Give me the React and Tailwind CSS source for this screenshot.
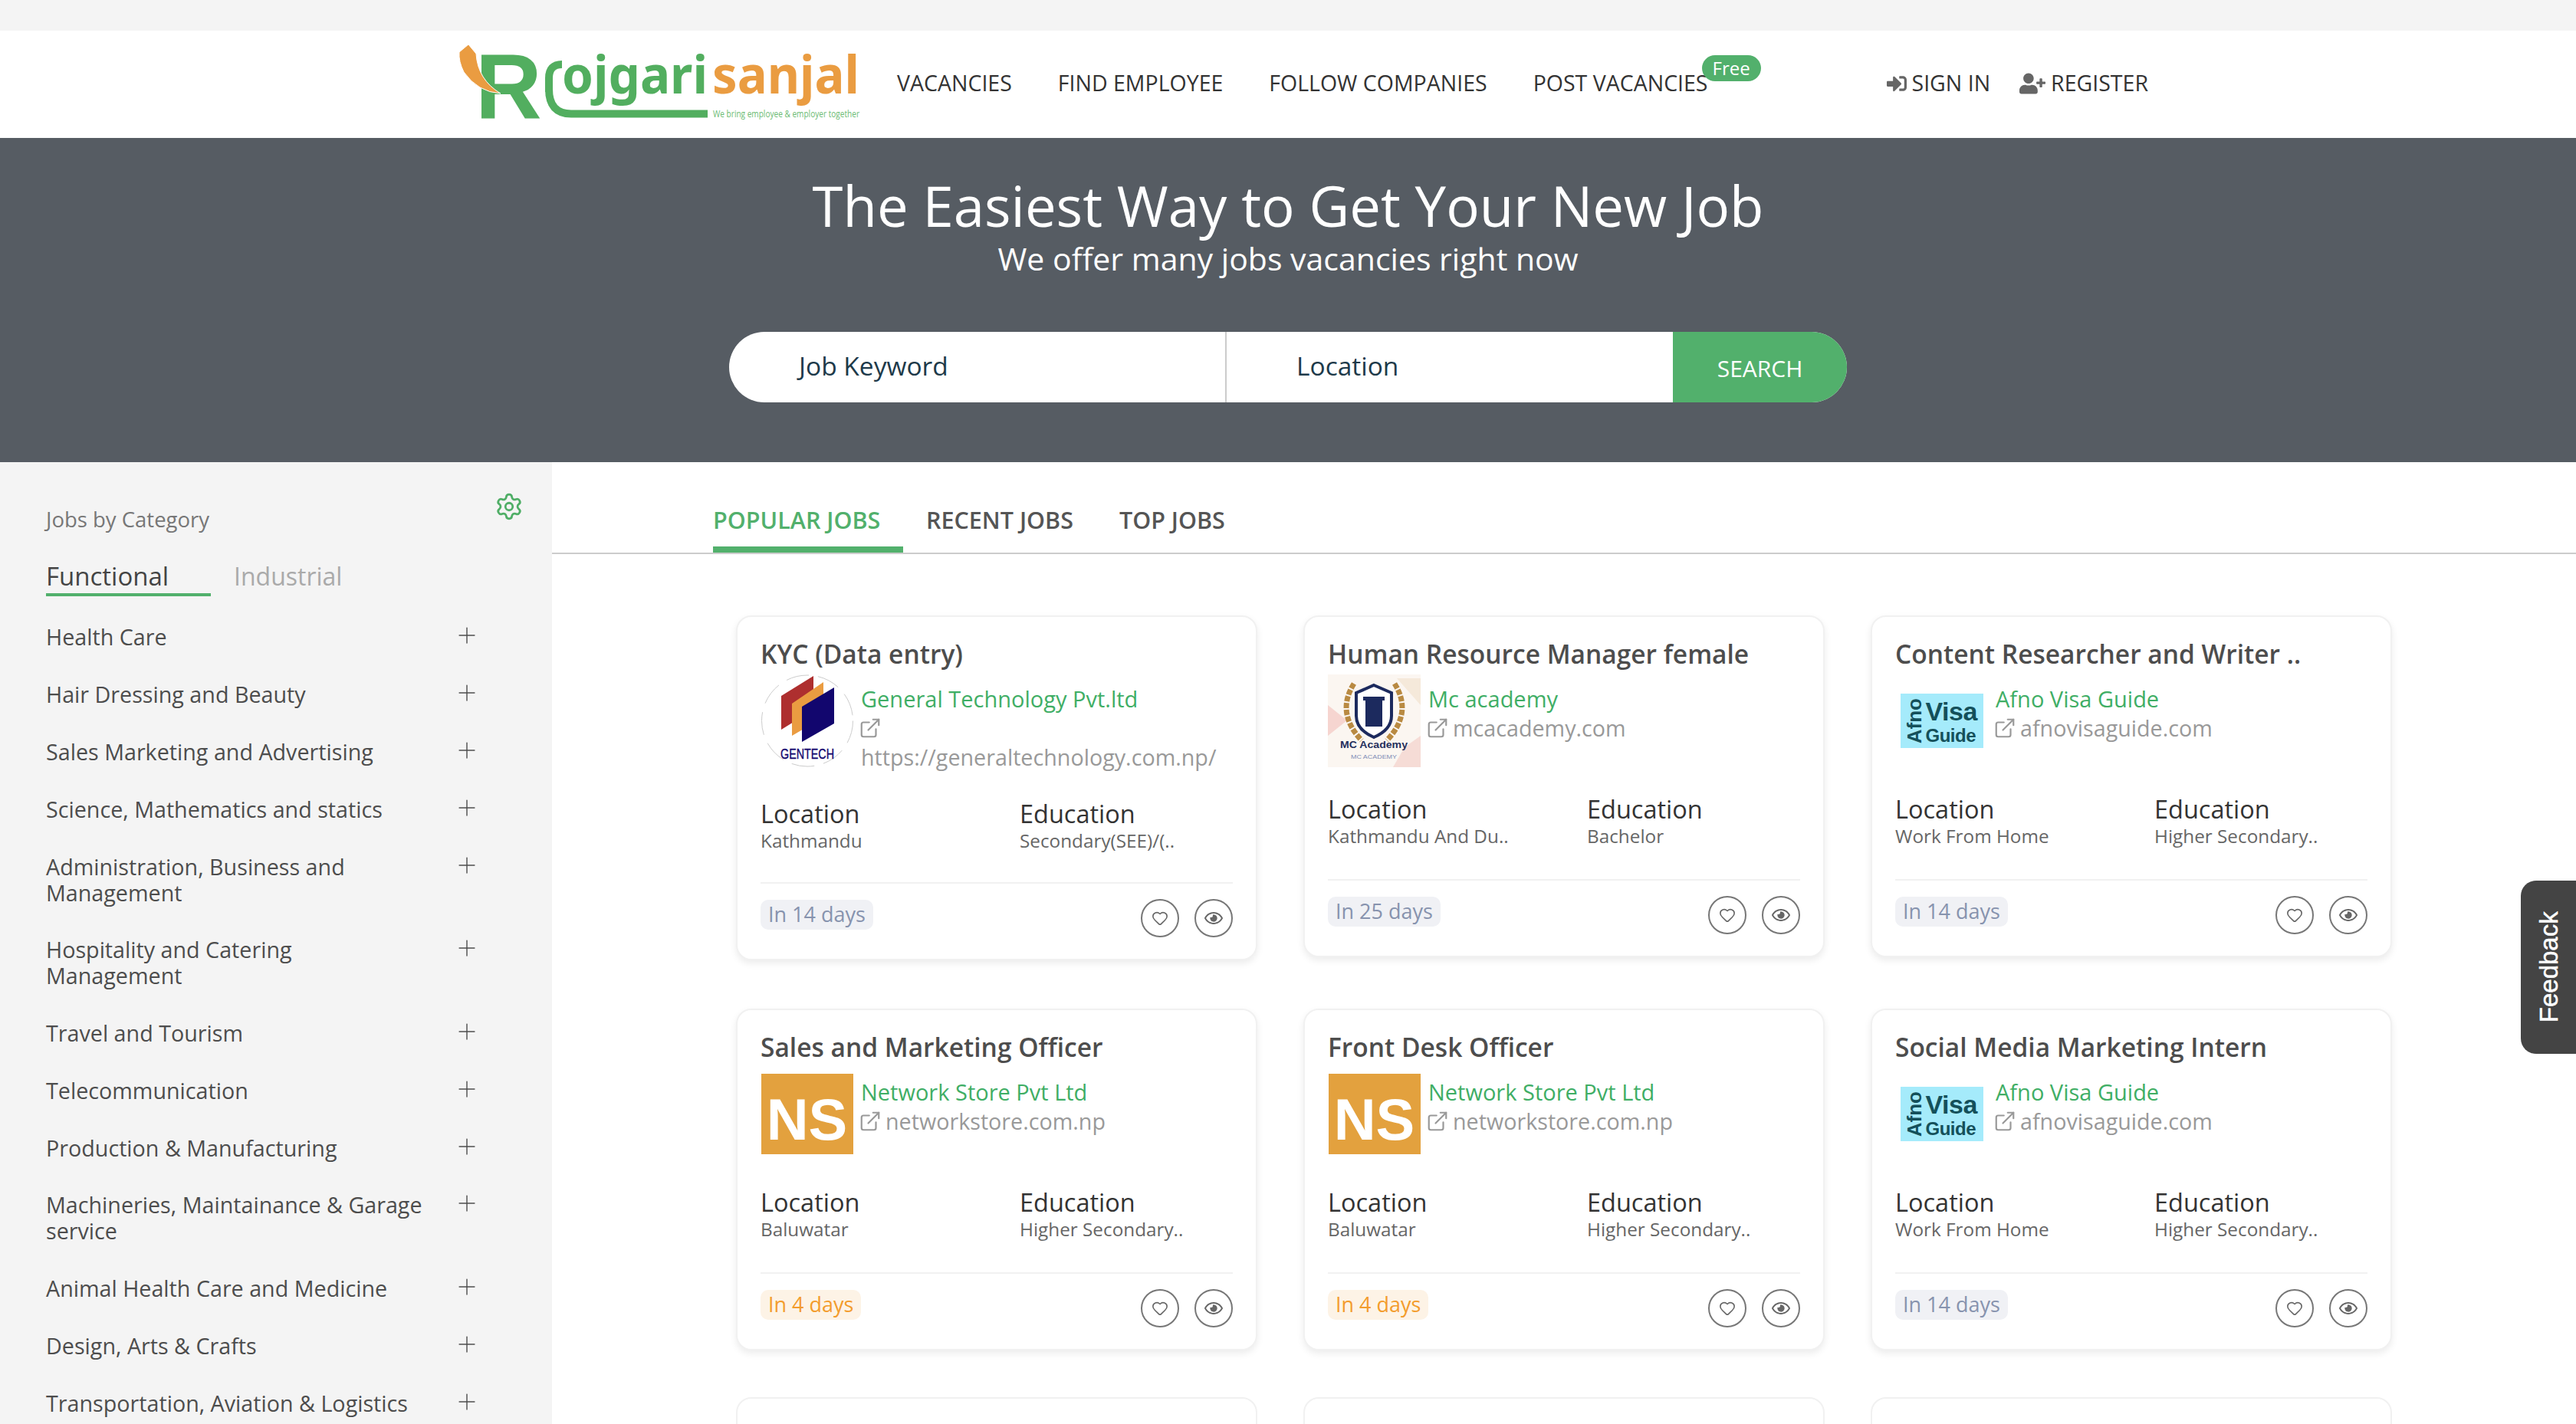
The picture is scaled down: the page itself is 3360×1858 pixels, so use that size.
// App.jsx
import React from 'react';
import { ExternalLink, Heart, Plus, Settings } from 'lucide-react';
import { FaRegEye, FaSignInAlt, FaUserPlus } from 'react-icons/fa';

const categories = [
  'Health Care',
  'Hair Dressing and Beauty',
  'Sales Marketing and Advertising',
  'Science, Mathematics and statics',
  'Administration, Business and Management',
  'Hospitality and Catering Management',
  'Travel and Tourism',
  'Telecommunication',
  'Production & Manufacturing',
  'Machineries, Maintainance & Garage service',
  'Animal Health Care and Medicine',
  'Design, Arts & Crafts',
  'Transportation, Aviation & Logistics',
];

const jobs = [
  { title: 'KYC (Data entry)', company: 'General Technology Pvt.ltd', site: 'https://generaltechnology.com.np/', logo: 'gentech', location: 'Kathmandu', education: 'Secondary(SEE)/(..', days: 'In 14 days', stacked: true },
  { title: 'Human Resource Manager female', company: 'Mc academy', site: 'mcacademy.com', logo: 'mc', location: 'Kathmandu And Du..', education: 'Bachelor', days: 'In 25 days' },
  { title: 'Content Researcher and Writer ..', company: 'Afno Visa Guide', site: 'afnovisaguide.com', logo: 'afno', location: 'Work From Home', education: 'Higher Secondary..', days: 'In 14 days' },
  { title: 'Sales and Marketing Officer', company: 'Network Store Pvt Ltd', site: 'networkstore.com.np', logo: 'ns', location: 'Baluwatar', education: 'Higher Secondary..', days: 'In 4 days', soon: true },
  { title: 'Front Desk Officer', company: 'Network Store Pvt Ltd', site: 'networkstore.com.np', logo: 'ns', location: 'Baluwatar', education: 'Higher Secondary..', days: 'In 4 days', soon: true },
  { title: 'Social Media Marketing Intern', company: 'Afno Visa Guide', site: 'afnovisaguide.com', logo: 'afno', location: 'Work From Home', education: 'Higher Secondary..', days: 'In 14 days' },
];

const SiteLogo = () => (
  <svg width="524" height="100" viewBox="0 0 524 100" className="shrink-0 overflow-visible">
    {/* underline swoosh, also the small r */}
    <path d="M117 60 V42 Q117 24 134 24 M117 56 Q117 88.5 146 88.5 H324" fill="none" stroke="#52ae5f" strokeWidth="10" />
    {/* the R */}
    <text x="21" y="95" fontFamily="'Liberation Sans', sans-serif" fontWeight="700" fontSize="120" fill="#52ae5f">R</text>
    {/* arrow over the R */}
    <path d="M12 -2 L22 10 Q24 44 54 62 Q24 60 6 34 Q-1 20 0 8 Z" fill="#ea9c41" stroke="#fff" strokeWidth="1" />
    <text x="134" y="62" fontFamily="'Noto Sans', sans-serif" fontWeight="700" fontSize="68" fill="#52ae5f" textLength="190" lengthAdjust="spacingAndGlyphs">ojgari</text>
    <text x="330" y="62" fontFamily="'Noto Sans', sans-serif" fontWeight="700" fontSize="68" fill="#ea9c41" textLength="192" lengthAdjust="spacingAndGlyphs">sanjal</text>
    <text x="331" y="93" fontFamily="'Open Sans', sans-serif" fontSize="12" fill="#6bbb73" textLength="191" lengthAdjust="spacingAndGlyphs">We bring employee &amp; employer together</text>
  </svg>
);

const GentechLogo = () => (
  <svg width="120" height="121" viewBox="0 0 120 121">
    <circle cx="60" cy="60.5" r="59.5" fill="#fff" stroke="#ccc" strokeWidth="1" strokeDasharray="30 12" />
    <polygon points="26,28 68,2 68,46 26,72" fill="#ae2f2f" />
    <polygon points="40,38 81,10 81,56 40,80" fill="#ea9c41" />
    <polygon points="53,42 95,17 95,64 53,88" fill="#12066e" />
    <text x="60" y="110" textAnchor="middle" fontFamily="'Liberation Sans', sans-serif" fontSize="18" fill="#12066e" stroke="#12066e" strokeWidth="0.4" textLength="70" lengthAdjust="spacingAndGlyphs">GENTECH</text>
  </svg>
);

const McLogo = () => (
  <svg width="121" height="121" viewBox="0 0 121 121">
    <rect width="121" height="121" fill="#fbf6f1" />
    <polygon points="0,40 25,60 0,80" fill="#f6d5d0" />
    <polygon points="90,5 121,5 121,40" fill="#f5e9da" />
    <polygon points="100,95 121,80 121,121 85,121" fill="#f6dcd6" />
    <path d="M34 12 Q10 50 44 86" fill="none" stroke="#b98a42" strokeWidth="7" strokeDasharray="7 2" />
    <path d="M87 12 Q111 50 77 86" fill="none" stroke="#b98a42" strokeWidth="7" strokeDasharray="7 2" />
    <path d="M60 14 L83 24 V54 Q83 72 60 82 Q37 72 37 54 V24 Z" fill="#fff" stroke="#1c2a5e" strokeWidth="4" />
    <rect x="49" y="34" width="22" height="34" fill="#1c2a5e" />
    <rect x="46" y="29" width="28" height="5" fill="#1c2a5e" />
    <text x="60" y="96" textAnchor="middle" fontFamily="'Liberation Sans', sans-serif" fontSize="12" fontWeight="700" fill="#25305c" textLength="88" lengthAdjust="spacingAndGlyphs">MC Academy</text>
    <text x="60" y="110" textAnchor="middle" fontFamily="'Liberation Sans', sans-serif" fontSize="8" fill="#7d8bb5" textLength="60" lengthAdjust="spacingAndGlyphs">MC ACADEMY</text>
  </svg>
);

const AfnoLogo = () => (
  <div className="flex h-[71px] w-[108px] items-center bg-[#a5ebfb] pl-[5px] font-['Liberation_Sans',sans-serif] font-bold leading-none text-[#14505a]">
    <span className="w-[26px] shrink-0 rotate-180 text-center text-[26px] [writing-mode:vertical-rl]">Afno</span>
    <div className="flex flex-col pl-[2px]">
      <span className="text-[34px] leading-[38px] tracking-[-0.5px]">Visa</span>
      <span className="text-[24px] leading-[26px] tracking-[-0.5px]">Guide</span>
    </div>
  </div>
);

const NsLogo = () => (
  <div className="flex h-[105px] w-[120px] items-center justify-center bg-[#e3a13e] pt-[14px] font-['Liberation_Sans',sans-serif] text-[76px] font-bold text-white">
    NS
  </div>
);

const CompanyLogo = ({ type }) => {
  if (type === 'gentech') return <GentechLogo />;
  if (type === 'mc') return <McLogo />;
  if (type === 'afno') return <AfnoLogo />;
  return <NsLogo />;
};

const JobCard = ({ job }) => (
  <div className={`rounded-[20px] border-2 border-[#f1f1f1] bg-white px-[30px] pt-[26px] pb-[28px] shadow-[0_4px_10px_rgba(0,0,0,0.08)] ${job.stacked ? 'mb-[2px]' : ''}`}>
    <h3 className="mb-[5px] text-[33.5px] leading-[44px] font-semibold whitespace-nowrap text-[#4d4d4d]">{job.title}</h3>
    <div className="flex min-h-[121px] items-start gap-[10px]">
      <div className="flex h-[121px] w-[121px] shrink-0 items-center justify-center">
        <CompanyLogo type={job.logo} />
      </div>
      <div className="pt-[13px] leading-[38px]">
        <div className="text-[29px] text-[#3fae65]">{job.company}</div>
        <div className={`text-[28.7px] text-[#999] ${job.stacked ? '' : 'flex items-center gap-[5px]'}`}>
          <ExternalLink size={30} strokeWidth={1.75} className={`-ml-[3px] shrink-0 ${job.stacked ? 'my-[4px]' : ''}`} />
          <span>{job.site}</span>
        </div>
      </div>
    </div>
    <div className={`mt-[35px] grid grid-cols-[338px_1fr] ${job.stacked ? 'mb-[39px]' : 'mb-[41px]'}`}>
      <div>
        <div className="text-[32.5px] leading-[40px] text-[#333]">Location</div>
        <div className="text-[24.3px] leading-[30px] text-[#666]">{job.location}</div>
      </div>
      <div>
        <div className="text-[32.5px] leading-[40px] text-[#333]">Education</div>
        <div className="text-[24.3px] leading-[30px] text-[#666]">{job.education}</div>
      </div>
    </div>
    <div className="flex items-start justify-between border-t-2 border-[#f1f1f1] pt-5">
      <span className={`mt-[1px] flex h-[39px] items-center rounded-[10px] px-[10px] text-[27px] ${job.soon ? 'bg-[#fdf3e6] text-[#f39c2c]' : 'bg-[#f0f1f5] text-[#8793ae]'}`}>
        {job.days}
      </span>
      <div className="flex gap-[20px] text-[#666]">
        <button className="flex h-[50px] w-[50px] items-center justify-center rounded-full border-2 border-[#777]">
          <Heart size={22} strokeWidth={1.75} />
        </button>
        <button className="flex h-[50px] w-[50px] items-center justify-center rounded-full border-2 border-[#777]">
          <FaRegEye size={24} />
        </button>
      </div>
    </div>
  </div>
);

const App = () => {
  return (
    <div className="relative h-[1858px] w-[3360px] overflow-hidden bg-white font-['Open_Sans',sans-serif]">
      <div className="h-10 bg-[#f4f4f4]" />

      {/* header */}
      <header className="flex h-[140px] items-center pl-[599px] text-[28.5px] text-[#333]">
        <SiteLogo />
        <nav className="ml-[47px] flex gap-[60px] pb-[3px]">
          <a>VACANCIES</a>
          <a>FIND EMPLOYEE</a>
          <a>FOLLOW COMPANIES</a>
          <a className="relative">
            POST VACANCIES
            <span className="absolute top-[-15px] left-[220px] flex h-[34px] w-[77px] items-center justify-center rounded-full bg-[#52b06c] text-[24px] text-white">Free</span>
          </a>
        </nav>
        <div className="ml-[233px] flex items-center gap-[38px] pb-[3px]">
          <a className="flex items-center gap-[7px]"><FaSignInAlt size={26} className="text-[#666]" />SIGN IN</a>
          <a className="flex items-center gap-[7px]"><FaUserPlus size={34} className="text-[#666]" />REGISTER</a>
        </div>
      </header>

      {/* hero */}
      <section className="flex h-[423px] flex-col items-center bg-[#565c63] pt-[43px] text-white">
        <h1 className="text-[72.5px] leading-[90px] font-normal">The Easiest Way to Get Your New Job</h1>
        <p className="mt-[2px] text-[41px] leading-[44px]">We offer many jobs vacancies right now</p>
        <div className="mt-[74px] flex h-[92px] w-[1458px] overflow-hidden rounded-full bg-white text-[33.5px] text-[#1e3a4a]">
          <div className="flex w-[649px] items-center border-r-2 border-[#ccc] pb-[4px] pl-[91px]">Job Keyword</div>
          <div className="flex flex-1 items-center pb-[4px] pl-[91px]">Location</div>
          <button className="w-[227px] bg-[#52b06c] pt-[2px] text-[30px] text-white">SEARCH</button>
        </div>
      </section>

      <div className="flex">
        {/* sidebar */}
        <aside className="h-[1255px] w-[720px] shrink-0 bg-[#f4f4f4] pl-[60px]">
          <div className="flex items-start justify-between pt-[40px] pr-[37px]">
            <span className="pt-[16px] text-[27.5px] leading-[38px] text-[#777]">Jobs by Category</span>
            <Settings size={38} strokeWidth={1.75} className="-mt-[1px] text-[#4fae66]" />
          </div>
          <div className="mt-[33px] flex text-[33px] leading-[44px]">
            <span className="w-[215px] border-b-4 border-[#52b06c] text-[#444]">Functional</span>
            <span className="ml-[30px] text-[32px] text-[#aaa]">Industrial</span>
          </div>
          <ul className="mt-[16px] w-[566px]">
            {categories.map((name) => (
              <li key={name} className="flex justify-between py-[20.4px] text-[28.7px] leading-[34px] text-[#4d4d4d]">
                <span className="w-[495px]">{name}</span>
                <Plus size={34} strokeWidth={1} className="-mt-[2px] shrink-0" />
              </li>
            ))}
          </ul>
        </aside>

        {/* jobs */}
        <main className="flex-1">
          <div className="flex h-[120px] items-end gap-[60px] border-b-2 border-[#ccc] pl-[210px] text-[30.5px] leading-[42px] font-semibold text-[#555]">
            <a className="h-[64px] w-[248px] border-b-[8px] border-[#52b06c] text-[#52b06c]">POPULAR JOBS</a>
            <a className="ml-[-30px] h-[64px]">RECENT JOBS</a>
            <a className="h-[64px]">TOP JOBS</a>
          </div>
          <div className="mt-[80px] ml-[240px] grid grid-cols-[repeat(3,680px)] items-start gap-x-[60px] gap-y-[61px]">
            {jobs.map((job, i) => (
              <JobCard key={i} job={job} />
            ))}
            <div className="h-[444px] rounded-[20px] border-2 border-[#f1f1f1] bg-white" />
            <div className="h-[444px] rounded-[20px] border-2 border-[#f1f1f1] bg-white" />
            <div className="h-[444px] rounded-[20px] border-2 border-[#f1f1f1] bg-white" />
          </div>
        </main>
      </div>

      {/* feedback tab */}
      <div className="absolute top-[1149px] right-0 flex h-[226px] w-[72px] items-center justify-center rounded-l-[20px] bg-[#444]">
        <span className="-rotate-90 font-['Liberation_Sans',sans-serif] text-[33px] whitespace-nowrap text-white [-webkit-text-stroke:0.5px_white]">Feedback</span>
      </div>
    </div>
  );
};

export default App;
